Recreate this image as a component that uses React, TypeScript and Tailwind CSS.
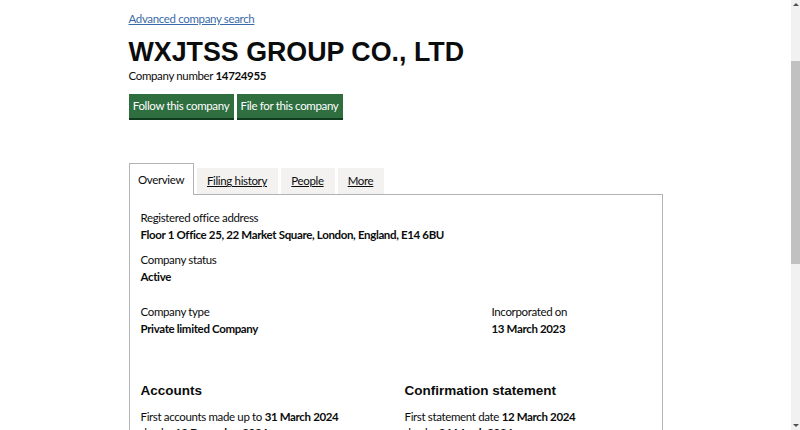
import React from "react";

const body = "font-['Lato','Noto_Sans',sans-serif] tracking-[-0.35px]";
const heading = "font-['Liberation_Sans',Arial,sans-serif] tracking-normal";

const tabs = [
  { label: "Overview", width: "w-[65px]", active: true },
  { label: "Filing history", width: "w-[81px]" },
  { label: "People", width: "w-[54px]" },
  { label: "More", width: "w-[46px]" },
];

const Field: React.FC<{ label: string; value: string; className?: string }> = ({
  label,
  value,
  className,
}) => (
  <div className={className}>
    <p className="text-[11.5px] leading-[16px]">{label}</p>
    <p className="mt-[1px] text-[11.5px] font-bold leading-[16px]">{value}</p>
  </div>
);

const Scrollbar: React.FC = () => (
  <div className="flex w-[9px] flex-col items-center bg-[#f1f1f1]">
    {/* up arrow */}
    <div className="mt-[3px] h-0 w-0 border-x-[3px] border-b-[3px] border-x-transparent border-b-[#505050]" />
    <div className="h-[55px]" />
    {/* thumb */}
    <div className="h-[203px] w-full bg-[#c1c1c1]" />
    <div className="flex-1" />
    {/* down arrow */}
    <div className="mb-[3px] h-0 w-0 border-x-[3px] border-t-[3px] border-x-transparent border-t-[#505050]" />
  </div>
);

export default function App() {
  return (
    <div className={`flex h-[430px] w-full overflow-hidden bg-white text-[#0b0c0c] ${body}`}>
      <main className="flex-1">
        <div className="mx-auto w-[534px] pt-[5px]">
          <a href="#" className="text-[11.5px] leading-[16px] text-[#3a6aa8] underline">
            Advanced company search
          </a>

          <h1 className={`mt-[8px] text-[26.8px] font-bold leading-[30px] ${heading}`}>
            WXJTSS GROUP CO., LTD
          </h1>
          <p className="mt-[1px] text-[11.5px] leading-[16px]">
            Company number <span className="font-bold">14724955</span>
          </p>

          <div className="mt-[10px] flex gap-[3px]">
            <button className="h-[24px] w-[105px] whitespace-nowrap bg-[#2e6e3f] text-[11.5px] text-white shadow-[0_2px_0_#0f3a1e]">
              Follow this company
            </button>
            <button className="h-[24px] w-[106px] whitespace-nowrap bg-[#2e6e3f] text-[11.5px] text-white shadow-[0_2px_0_#0f3a1e]">
              File for this company
            </button>
          </div>

          {/* tabs */}
          <div className="mt-[45px] flex items-end gap-[2px]">
            {tabs.map((tab) =>
              tab.active ? (
                <div
                  key={tab.label}
                  className={`relative -mb-px flex h-[32px] ${tab.width} items-center justify-center border border-b-0 border-[#b1b4b6] bg-white text-[11.5px]`}
                >
                  {tab.label}
                </div>
              ) : (
                <a
                  key={tab.label}
                  href="#"
                  className={`ml-[1px] flex h-[26px] ${tab.width} items-center justify-center bg-[#f3f2f1] text-[11.5px] underline`}
                >
                  {tab.label}
                </a>
              )
            )}
          </div>

          {/* panel */}
          <div className="h-[300px] border border-[#b1b4b6] px-[11px] pt-[15px]">
            <Field
              label="Registered office address"
              value="Floor 1 Office 25, 22 Market Square, London, England, E14 6BU"
            />
            <Field className="mt-[9px]" label="Company status" value="Active" />

            <div className="mt-[19px] flex">
              <Field className="w-[351px]" label="Company type" value="Private limited Company" />
              <Field label="Incorporated on" value="13 March 2023" />
            </div>

            <div className="mt-[45px] flex">
              <div className="w-[264px]">
                <h2 className={`text-[13.5px] font-bold leading-[18px] ${heading}`}>Accounts</h2>
                <p className="mt-[9px] text-[11.5px] leading-[16px]">
                  First accounts made up to <span className="font-bold">31 March 2024</span>
                </p>
                <p className="text-[11.5px] leading-[16px]">
                  due by <span className="font-bold">12 December 2024</span>
                </p>
              </div>
              <div>
                <h2 className={`text-[13.5px] font-bold leading-[18px] ${heading}`}>
                  Confirmation statement
                </h2>
                <p className="mt-[9px] text-[11.5px] leading-[16px]">
                  First statement date <span className="font-bold">12 March 2024</span>
                </p>
                <p className="text-[11.5px] leading-[16px]">
                  due by <span className="font-bold">26 March 2024</span>
                </p>
              </div>
            </div>
          </div>
        </div>
      </main>
      <Scrollbar />
    </div>
  );
}
